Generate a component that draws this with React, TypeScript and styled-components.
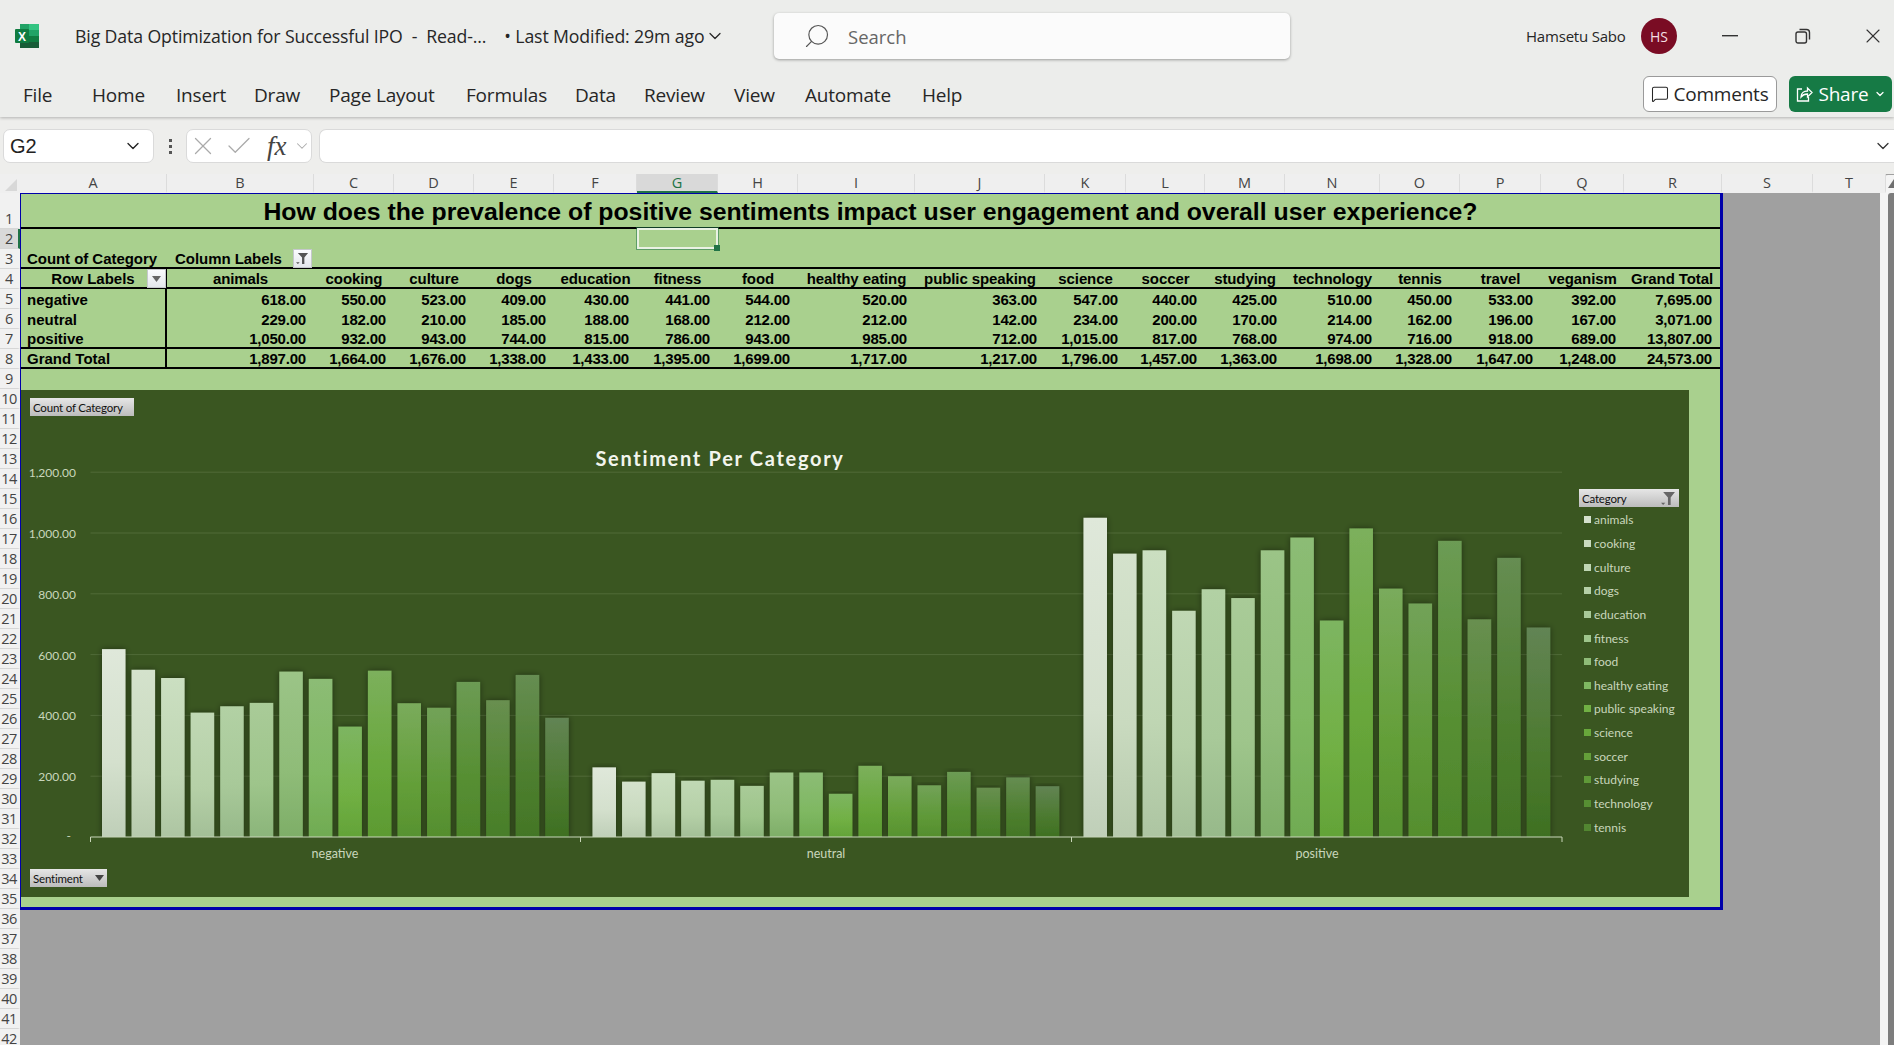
import styled, { createGlobalStyle } from 'styled-components';
import { ChevronDown, MessageSquare, Search, X, Check } from 'lucide-react';

const GlobalStyle = createGlobalStyle`
  html, body {
    margin: 0;
    padding: 0;
    background: #a0a0a0;
    overflow: hidden;
  }
  * {
    box-sizing: border-box;
  }
`;

const UI_FONT = `"Open Sans", "Noto Sans", sans-serif`;
const SHEET_FONT = `"Liberation Sans", Arial, sans-serif`;
const CHART_FONT = `Lato, "Open Sans", sans-serif`;

const COLS = '146px 147px 80px 80px 80px 83px 81px 80px 117px 130px 81px 79px 80px 95px 80px 81px 83px 96px';

const Page = styled.div`
  width: 1894px;
  height: 1045px;
  display: flex;
  flex-direction: column;
  overflow: hidden;
  background: #a0a0a0;
`;

const Ribbon = styled.header`
  height: 117px;
  background: #ecedeb;
  box-shadow: 0 1px 3px rgba(0, 0, 0, 0.25);
  position: relative;
  z-index: 2;
  font-family: ${UI_FONT};
  color: #262626;
`;

const TitleBar = styled.div`
  height: 72px;
  display: flex;
  align-items: center;
  padding-left: 15px;
`;

const Logo = styled.svg`
  width: 24px;
  height: 24px;
  flex: none;
`;

const DocTitle = styled.div`
  width: 625px;
  margin-left: 36px;
  font-size: 17.7px;
  white-space: pre;
  letter-spacing: -0.12px;
`;

const TitleChevron = styled(ChevronDown)`
  width: 20px;
  height: 20px;
  margin-left: 5px;
  stroke-width: 1.5;
`;

const SearchBox = styled.div`
  width: 516px;
  height: 46px;
  margin-left: 49px;
  background: #fbfbfb;
  border-radius: 5px;
  box-shadow: 0 1px 3px rgba(0, 0, 0, 0.35);
  display: flex;
  align-items: center;
  padding-left: 29px;
  gap: 17px;
  font-size: 18.5px;
  color: #666;
`;

const SearchIcon = styled(Search)`
  width: 28px;
  height: 28px;
  stroke-width: 1;
  transform: scaleX(-1);
  color: #555;
`;

const UserName = styled.div`
  margin-left: 236px;
  width: 115px;
  font-size: 15px;
  letter-spacing: -0.2px;
`;

const Avatar = styled.div`
  width: 36px;
  height: 36px;
  border-radius: 50%;
  background: #7a0c24;
  color: #f3dfe3;
  font-size: 14px;
  display: flex;
  align-items: center;
  justify-content: center;
`;

const WinButton = styled.div<{ $w: number }>`
  width: ${(p) => p.$w}px;
  display: flex;
  justify-content: flex-end;
  align-items: center;
  color: #333;
`;

const TabRow = styled.nav`
  height: 45px;
  display: flex;
  align-items: flex-start;
  padding-left: 23px;
  position: relative;
`;

const Tab = styled.div<{ $w: number }>`
  width: ${(p) => p.$w}px;
  margin-top: 11px;
  font-size: 19px;
  line-height: 24px;
  letter-spacing: -0.2px;
  white-space: nowrap;
`;

const TabActions = styled.div`
  margin-left: auto;
  margin-top: 4px;
  padding-right: 2px;
  display: flex;
  gap: 12px;
`;

const CommentsButton = styled.div`
  width: 134px;
  height: 36px;
  background: #fff;
  border: 1px solid #9a9a9a;
  border-radius: 6px;
  display: flex;
  align-items: center;
  justify-content: center;
  gap: 4px;
  font-size: 19px;
  letter-spacing: -0.2px;
`;

const ShareButton = styled.div`
  width: 103px;
  height: 36px;
  background: #167a45;
  color: #fff;
  border-radius: 6px;
  display: flex;
  align-items: center;
  justify-content: center;
  gap: 5px;
  font-size: 19px;
  letter-spacing: -0.2px;
`;

const FormulaRow = styled.div`
  height: 57px;
  background: #eeeeec;
  padding: 12px 0 11px 3px;
  display: flex;
  align-items: stretch;
  font-family: ${SHEET_FONT};
`;

const NameBox = styled.div`
  width: 151px;
  background: #fff;
  border: 1px solid #dadada;
  border-radius: 7px;
  display: flex;
  align-items: center;
  justify-content: space-between;
  padding: 0 10px 0 6px;
  font-size: 20px;
  color: #222;
`;

const Dots = styled.div`
  width: 32px;
  display: flex;
  flex-direction: column;
  align-items: center;
  justify-content: center;
  gap: 3px;
`;

const Dot = styled.span`
  width: 3px;
  height: 3px;
  background: #555;
`;

const FxBox = styled.div`
  width: 126px;
  background: #fff;
  border: 1px solid #dadada;
  border-radius: 7px;
  display: flex;
  align-items: center;
  padding-left: 1px;
  color: #aaa;
`;

const CheckIcon = styled(Check)`
  margin-left: 6px;
`;

const FxLabel = styled.span`
  font-family: "Liberation Serif", serif;
  font-style: italic;
  font-size: 27px;
  color: #444;
  margin-left: 13px;
  margin-right: 6px;
`;

const FormulaInput = styled.div`
  flex: 1;
  margin-left: 7px;
  background: #fff;
  border: 1px solid #dadada;
  border-right: none;
  border-radius: 7px 0 0 7px;
  display: flex;
  align-items: center;
  justify-content: flex-end;
  padding-right: 1px;
  color: #333;
`;

const Workspace = styled.div`
  flex: 1;
  display: flex;
  min-height: 0;
  background: #eeeeec;
`;

const GridArea = styled.div`
  width: 1880px;
  flex: none;
  display: flex;
  flex-direction: column;
  min-height: 0;
`;

const ColumnBar = styled.div`
  height: 19px;
  width: 1886px;
  position: relative;
  z-index: 1;
  display: flex;
  background: #efefef;
  font-family: ${UI_FONT};
  font-size: 14.5px;
  color: #444;
`;

const Corner = styled.div`
  width: 20px;
  position: relative;
  &::after {
    content: '';
    position: absolute;
    right: 3px;
    bottom: 2px;
    border-style: solid;
    border-width: 0 0 12px 12px;
    border-color: transparent transparent #d8d8d8 transparent;
  }
`;

const ColHead = styled.div<{ $w: number; $active?: boolean }>`
  width: ${(p) => p.$w}px;
  flex: none;
  display: flex;
  align-items: center;
  justify-content: center;
  border-right: 1px solid #dcdcdc;
  background: ${(p) => (p.$active ? '#d9d9d9' : 'transparent')};
  border-bottom: 2px solid ${(p) => (p.$active ? '#217346' : 'transparent')};
  color: ${(p) => (p.$active ? '#217346' : '#444')};
`;

const SheetRow = styled.div`
  flex: 1;
  display: flex;
  min-height: 0;
`;

const RowBar = styled.div`
  width: 20px;
  flex: none;
  background: #f1f1f1;
  font-family: ${UI_FONT};
  font-size: 14.5px;
  color: #444;
  overflow: hidden;
`;

const RowHead = styled.div<{ $first?: boolean; $active?: boolean }>`
  height: ${(p) => (p.$first ? 36 : 20)}px;
  display: flex;
  align-items: ${(p) => (p.$first ? 'flex-end' : 'center')};
  justify-content: center;
  border-bottom: 1px solid #d6d6d6;
  background: ${(p) => (p.$active ? '#d9d9d9' : 'transparent')};
  border-right: 2px solid ${(p) => (p.$active ? '#217346' : 'transparent')};
  letter-spacing: -0.5px;
`;

const Canvas = styled.div`
  flex: 1;
  background: #a0a0a0;
  min-width: 0;
`;

const Sheet = styled.div`
  width: 1703px;
  height: 717px;
  background: #a9d08e;
  border-top: 1px solid #0000aa;
  border-left: 1px solid #0000aa;
  border-right: 3px solid #0000aa;
  border-bottom: 3px solid #0000aa;
  font-family: ${SHEET_FONT};
  font-weight: bold;
  font-size: 15px;
  color: #000;
`;

const TitleCell = styled.div`
  height: 35px;
  padding-top: 3px;
  border-bottom: 2px solid #000;
  display: flex;
  align-items: center;
  justify-content: center;
  font-size: 24.8px;
`;

const Row = styled.div<{ $ruled?: boolean }>`
  height: 20px;
  display: grid;
  grid-template-columns: ${COLS};
  border-bottom: ${(p) => (p.$ruled ? '2px solid #000' : 'none')};
`;

const Cell = styled.div`
  display: flex;
  align-items: center;
  justify-content: flex-end;
  padding: 0 8px 0 6px;
  white-space: nowrap;
  letter-spacing: -0.2px;
  position: relative;
`;

const HeaderCell = styled.div`
  display: flex;
  align-items: center;
  justify-content: center;
  white-space: nowrap;
  letter-spacing: -0.1px;
`;

const LabelCell = styled(Cell)`
  justify-content: flex-start;
  letter-spacing: 0;
  border-right: 2px solid #000;
`;

const HeadLabelCell = styled(LabelCell)`
  justify-content: center;
  padding: 0;
`;

const PlainLabel = styled(Cell)`
  justify-content: flex-start;
  letter-spacing: -0.05px;
`;

const ColumnLabel = styled(PlainLabel)`
  padding-left: 8px;
`;

const FilterButton = styled.div<{ $left: number }>`
  position: absolute;
  left: ${(p) => p.$left}px;
  top: 0;
  width: 19px;
  height: 19px;
  background: linear-gradient(#fbfcfe, #e4e7ec);
  border: 1px solid #c5c8cc;
  display: flex;
  align-items: center;
  justify-content: center;
`;

const SelectedCell = styled.div`
  grid-column: 7;
  position: relative;
  margin: -1px 0 0 0;
  height: 21px;
  border: 2px solid #eaf2e4;
  box-shadow: 0 0 0 1px rgba(33, 115, 70, 0.55);
  &::after {
    content: '';
    position: absolute;
    right: -4px;
    bottom: -4px;
    width: 6px;
    height: 6px;
    background: #217346;
  }
`;

const ChartWrap = styled.div`
  padding: 21px 31px 10px 0;
`;

const ChartPanel = styled.div`
  position: relative;
  height: 507px;
  background: #3a5621;
  font-family: ${CHART_FONT};
  font-weight: normal;
`;

const Plot = styled.svg`
  display: block;
  width: 100%;
  height: 100%;
`;

const FieldButton = styled.div<{ $x: number; $y: number; $w: number }>`
  position: absolute;
  left: ${(p) => p.$x}px;
  top: ${(p) => p.$y}px;
  width: ${(p) => p.$w}px;
  height: 18px;
  background: linear-gradient(#e6e6e6, #bcbcbc);
  color: #111;
  font-size: 11.5px;
  letter-spacing: -0.2px;
  padding: 0 3px;
  display: flex;
  align-items: center;
  justify-content: space-between;
  white-space: nowrap;
`;

const Legend = styled.div`
  position: absolute;
  left: 1563px;
  top: 118px;
  display: flex;
  flex-direction: column;
  color: #c9d6bc;
  font-size: 12px;
`;

const LegendItem = styled.div`
  height: 23.65px;
  display: flex;
  align-items: center;
  gap: 3px;
  white-space: nowrap;
`;

const Swatch = styled.span<{ $c: string }>`
  width: 7px;
  height: 7px;
  background: ${(p) => p.$c};
`;

const Rail = styled.div`
  flex: 1;
  background: #a0a0a0;
  display: flex;
  flex-direction: column;
`;

const RailInner = styled.div`
  flex: 1;
  background: #f4f4f4;
  border-radius: 8px 0 0 0;
  display: flex;
  flex-direction: column;
  align-items: flex-end;
  margin-top: 1px;
`;

const RailArrow = styled.div`
  margin: 4px 0 5px;
  border-style: solid;
  border-width: 0 0 9px 6px;
  border-color: transparent transparent #6f6f6f transparent;
`;

const RailThumb = styled.div`
  width: 6px;
  flex: 1;
  background: #7d7d7d;
  border-radius: 3px 0 0 0;
`;

const columnHeads: [string, number][] = [
  ['A', 147], ['B', 147], ['C', 80], ['D', 80], ['E', 80], ['F', 83], ['G', 81], ['H', 80], ['I', 117],
  ['J', 130], ['K', 81], ['L', 79], ['M', 80], ['N', 95], ['O', 80], ['P', 81], ['Q', 83], ['R', 98],
  ['S', 91], ['T', 73],
];

const tabs: [string, number][] = [
  ['File', 69], ['Home', 84], ['Insert', 78], ['Draw', 75], ['Page Layout', 137], ['Formulas', 109],
  ['Data', 69], ['Review', 90], ['View', 71], ['Automate', 117], ['Help', 50],
];

const headers = [
  'animals', 'cooking', 'culture', 'dogs', 'education', 'fitness', 'food', 'healthy eating', 'public speaking',
  'science', 'soccer', 'studying', 'technology', 'tennis', 'travel', 'veganism',
];

const negative = [618, 550, 523, 409, 430, 441, 544, 520, 363, 547, 440, 425, 510, 450, 533, 392];
const neutral = [229, 182, 210, 185, 188, 168, 212, 212, 142, 234, 200, 170, 214, 162, 196, 167];
const positive = [1050, 932, 943, 744, 815, 786, 943, 985, 712, 1015, 817, 768, 974, 716, 918, 689];

const rows: { label: string; values: string[]; ruled?: boolean }[] = [
  {
    label: 'negative',
    values: ['618.00', '550.00', '523.00', '409.00', '430.00', '441.00', '544.00', '520.00', '363.00', '547.00', '440.00', '425.00', '510.00', '450.00', '533.00', '392.00', '7,695.00'],
  },
  {
    label: 'neutral',
    values: ['229.00', '182.00', '210.00', '185.00', '188.00', '168.00', '212.00', '212.00', '142.00', '234.00', '200.00', '170.00', '214.00', '162.00', '196.00', '167.00', '3,071.00'],
  },
  {
    label: 'positive',
    ruled: true,
    values: ['1,050.00', '932.00', '943.00', '744.00', '815.00', '786.00', '943.00', '985.00', '712.00', '1,015.00', '817.00', '768.00', '974.00', '716.00', '918.00', '689.00', '13,807.00'],
  },
  {
    label: 'Grand Total',
    ruled: true,
    values: ['1,897.00', '1,664.00', '1,676.00', '1,338.00', '1,433.00', '1,395.00', '1,699.00', '1,717.00', '1,217.00', '1,796.00', '1,457.00', '1,363.00', '1,698.00', '1,328.00', '1,647.00', '1,248.00', '24,573.00'],
  },
];

const shades = [
  ['#dfe8da', '#d4e0cd', '#bfcfb8'],
  ['#d4e2cc', '#c9dabf', '#b7caad'],
  ['#cbdfc1', '#bfd6b3', '#adc5a2'],
  ['#c0d8b4', '#b5d0a7', '#a3bf97'],
  ['#b2d1a4', '#a8c999', '#97b98a'],
  ['#a9cb98', '#9ec58b', '#8bb57a'],
  ['#9bc487', '#8fbc78', '#7eae68'],
  ['#8cbc75', '#7fb862', '#70ab52'],
  ['#7db561', '#71b044', '#63a338'],
  ['#7cb05c', '#68a73b', '#5c9a32'],
  ['#7aab5c', '#649f39', '#579230'],
  ['#72a258', '#5f9938', '#558e2e'],
  ['#6c9b54', '#578f33', '#4e862b'],
  ['#688f50', '#528631', '#487e29'],
  ['#668d52', '#4e7f2f', '#437626'],
  ['#628454', '#4c7a2f', '#3e7022'],
];

const legendItems = headers.slice(0, 14);

const BASE_Y = 837;
const UNIT = 0.304;
const axisTicks: [string, number][] = [
  ['1,200.00', 1200], ['1,000.00', 1000], ['800.00', 800], ['600.00', 600], ['400.00', 400], ['200.00', 200],
];
const groups: [string, number[], number, number][] = [
  ['negative', negative, 102, 335],
  ['neutral', neutral, 592.5, 826],
  ['positive', positive, 1083.5, 1317],
];

function FunnelIcon({ size = 13, color = '#555' }: { size?: number; color?: string }) {
  return (
    <svg width={size} height={size} viewBox="0 0 14 14">
      <path d="M2 1h11L9 6v7H6.500V6z" fill={color} />
      <path d="M0 11h4l-2 2z" fill={color} />
    </svg>
  );
}

function Chart() {
  return (
    <Plot viewBox="21 390 1668 507">
      <defs>
        {shades.map((s, i) => (
          <linearGradient key={i} id={`bar${i}`} x1="0" y1="0" x2="0" y2="1">
            <stop offset="0" stopColor={s[0]} />
            <stop offset="0.6" stopColor={s[1]} />
            <stop offset="1" stopColor={s[2]} />
          </linearGradient>
        ))}
        <filter id="barShadow" x="-30%" y="-5%" width="160%" height="105%">
          <feDropShadow dx="0" dy="0" stdDeviation="3" floodColor="#000" floodOpacity="0.45" />
        </filter>
      </defs>
      <text x="720" y="466" textAnchor="middle" fill="#f2f5ee" fontSize="20" fontWeight="700" letterSpacing="1.7">
        Sentiment Per Category
      </text>
      {axisTicks.map(([label, v]) => (
        <g key={label}>
          <line x1="90.500" x2="1562" y1={BASE_Y - v * UNIT} y2={BASE_Y - v * UNIT} stroke="#506b38" />
          <text x="76" y={BASE_Y - v * UNIT + 5} textAnchor="end" fill="#c9d6bc" fontSize="12">
            {label}
          </text>
        </g>
      ))}
      <text x="71" y={BASE_Y + 3} textAnchor="end" fill="#c9d6bc" fontSize="12">
        -
      </text>
      {groups.map(([label, values, start, center]) => (
        <g key={label}>
          {values.map((v, i) => (
            <rect
              key={i}
              x={start + i * 29.55}
              y={BASE_Y - v * UNIT}
              width="23.500"
              height={v * UNIT}
              fill={`url(#bar${i})`}
              filter="url(#barShadow)"
            />
          ))}
          <text x={center} y={BASE_Y + 21} textAnchor="middle" fill="#c9d6bc" fontSize="12.500">
            {label}
          </text>
        </g>
      ))}
      <line x1="90.500" x2="1562" y1={BASE_Y} y2={BASE_Y} stroke="#c8d6b9" strokeWidth="1.200" />
      {[90.5, 580.5, 1071.5, 1562].map((x) => (
        <line key={x} x1={x} x2={x} y1={BASE_Y} y2={BASE_Y + 5} stroke="#c8d6b9" />
      ))}
    </Plot>
  );
}

export default function App() {
  const rowNumbers = Array.from({ length: 42 }, (_, i) => i + 1);
  return (
    <Page>
      <GlobalStyle />
      <Ribbon>
        <TitleBar>
          <Logo viewBox="0 0 24 24">
            <rect x="5" y="0" width="19" height="6.500" fill="#21a366" />
            <rect x="14" y="0" width="10" height="6.500" fill="#33c481" />
            <rect x="5" y="6" width="19" height="6.500" fill="#107c41" />
            <rect x="14" y="6" width="10" height="6.500" fill="#21a366" />
            <rect x="5" y="12" width="19" height="6.500" fill="#185c37" />
            <rect x="14" y="12" width="10" height="6.500" fill="#107c41" />
            <rect x="5" y="18" width="19" height="6" fill="#185c37" />
            <rect x="0" y="5" width="14" height="14" rx="1" fill="#107c41" />
            <text x="7" y="16.500" textAnchor="middle" fill="#fff" fontSize="12" fontWeight="700" fontFamily="Liberation Sans">
              X
            </text>
          </Logo>
          <DocTitle>Big Data Optimization for Successful IPO  -  Read-...    • Last Modified: 29m ago</DocTitle>
          <TitleChevron />
          <SearchBox>
            <SearchIcon />
            Search
          </SearchBox>
          <UserName>Hamsetu Sabo</UserName>
          <Avatar>HS</Avatar>
          <WinButton $w={61}>
            <svg width="16" height="2" viewBox="0 0 16 2">
              <rect width="16" height="1.400" fill="#333" />
            </svg>
          </WinButton>
          <WinButton $w={73}>
            <svg width="16" height="16" viewBox="0 0 16 16" fill="none" stroke="#333" strokeWidth="1.400">
              <rect x="1" y="4" width="10.500" height="11" rx="2" />
              <path d="M4.500 1.500h7a3 3 0 0 1 3 3v7" />
            </svg>
          </WinButton>
          <WinButton $w={74}>
            <X size={24} strokeWidth={1.1} />
          </WinButton>
        </TitleBar>
        <TabRow>
          {tabs.map(([name, w]) => (
            <Tab key={name} $w={w}>
              {name}
            </Tab>
          ))}
          <TabActions>
            <CommentsButton>
              <MessageSquare size={18} strokeWidth={1.4} />
              Comments
            </CommentsButton>
            <ShareButton>
              <svg width="18" height="18" viewBox="0 0 18 18" fill="none" stroke="#fff" strokeWidth="1.300">
                <path d="M7 4H2.500v12h11v-4" />
                <path d="M6 12c0-4 3-6 6.500-6V3l4.500 4.500-4.500 4.500V9C10 9 7.500 10 6 12z" />
              </svg>
              Share
              <ChevronDown size={12} strokeWidth={2.5} />
            </ShareButton>
          </TabActions>
        </TabRow>
      </Ribbon>
      <FormulaRow>
        <NameBox>
          G2
          <ChevronDown size={20} strokeWidth={1.6} />
        </NameBox>
        <Dots>
          <Dot />
          <Dot />
          <Dot />
        </Dots>
        <FxBox>
          <X size={30} strokeWidth={1} />
          <CheckIcon size={30} strokeWidth={1} />
          <FxLabel>fx</FxLabel>
          <ChevronDown size={18} strokeWidth={1.4} />
        </FxBox>
        <FormulaInput>
          <ChevronDown size={20} strokeWidth={1.5} />
        </FormulaInput>
      </FormulaRow>
      <Workspace>
        <GridArea>
          <ColumnBar>
            <Corner />
            {columnHeads.map(([name, w]) => (
              <ColHead key={name} $w={w} $active={name === 'G'}>
                {name}
              </ColHead>
            ))}
          </ColumnBar>
          <SheetRow>
            <RowBar>
              {rowNumbers.map((n) => (
                <RowHead key={n} $first={n === 1} $active={n === 2}>
                  {n}
                </RowHead>
              ))}
            </RowBar>
            <Canvas>
              <Sheet>
                <TitleCell>How does the prevalence of positive sentiments impact user engagement and overall user experience?</TitleCell>
                <Row>
                  <SelectedCell />
                </Row>
                <Row $ruled>
                  <PlainLabel>Count of Category</PlainLabel>
                  <ColumnLabel>
                    Column Labels
                    <FilterButton $left={126}>
                      <FunnelIcon />
                    </FilterButton>
                  </ColumnLabel>
                </Row>
                <Row $ruled>
                  <HeadLabelCell>
                    Row Labels
                    <FilterButton $left={126}>
                      <svg width="9" height="6" viewBox="0 0 9 6">
                        <path d="M0 0h9L4.500 6z" fill="#666" />
                      </svg>
                    </FilterButton>
                  </HeadLabelCell>
                  {headers.map((h) => (
                    <HeaderCell key={h}>{h}</HeaderCell>
                  ))}
                  <HeaderCell>Grand Total</HeaderCell>
                </Row>
                {rows.map((r) => (
                  <Row key={r.label} $ruled={r.ruled}>
                    <LabelCell>{r.label}</LabelCell>
                    {r.values.map((v, i) => (
                      <Cell key={i}>{v}</Cell>
                    ))}
                  </Row>
                ))}
                <ChartWrap>
                  <ChartPanel>
                    <Chart />
                    <FieldButton $x={9} $y={8} $w={104}>
                      Count of Category
                    </FieldButton>
                    <FieldButton $x={9} $y={479} $w={77}>
                      Sentiment
                      <svg width="9" height="6" viewBox="0 0 9 6">
                        <path d="M0 0h9L4.500 6z" fill="#444" />
                      </svg>
                    </FieldButton>
                    <FieldButton $x={1558} $y={99} $w={100}>
                      Category
                      <FunnelIcon size={15} color="#666" />
                    </FieldButton>
                    <Legend>
                      {legendItems.map((name, i) => (
                        <LegendItem key={name}>
                          <Swatch $c={shades[i][1]} />
                          {name}
                        </LegendItem>
                      ))}
                    </Legend>
                  </ChartPanel>
                </ChartWrap>
              </Sheet>
            </Canvas>
          </SheetRow>
        </GridArea>
        <Rail>
          <RailInner>
            <RailArrow />
            <RailThumb />
          </RailInner>
        </Rail>
      </Workspace>
    </Page>
  );
}
